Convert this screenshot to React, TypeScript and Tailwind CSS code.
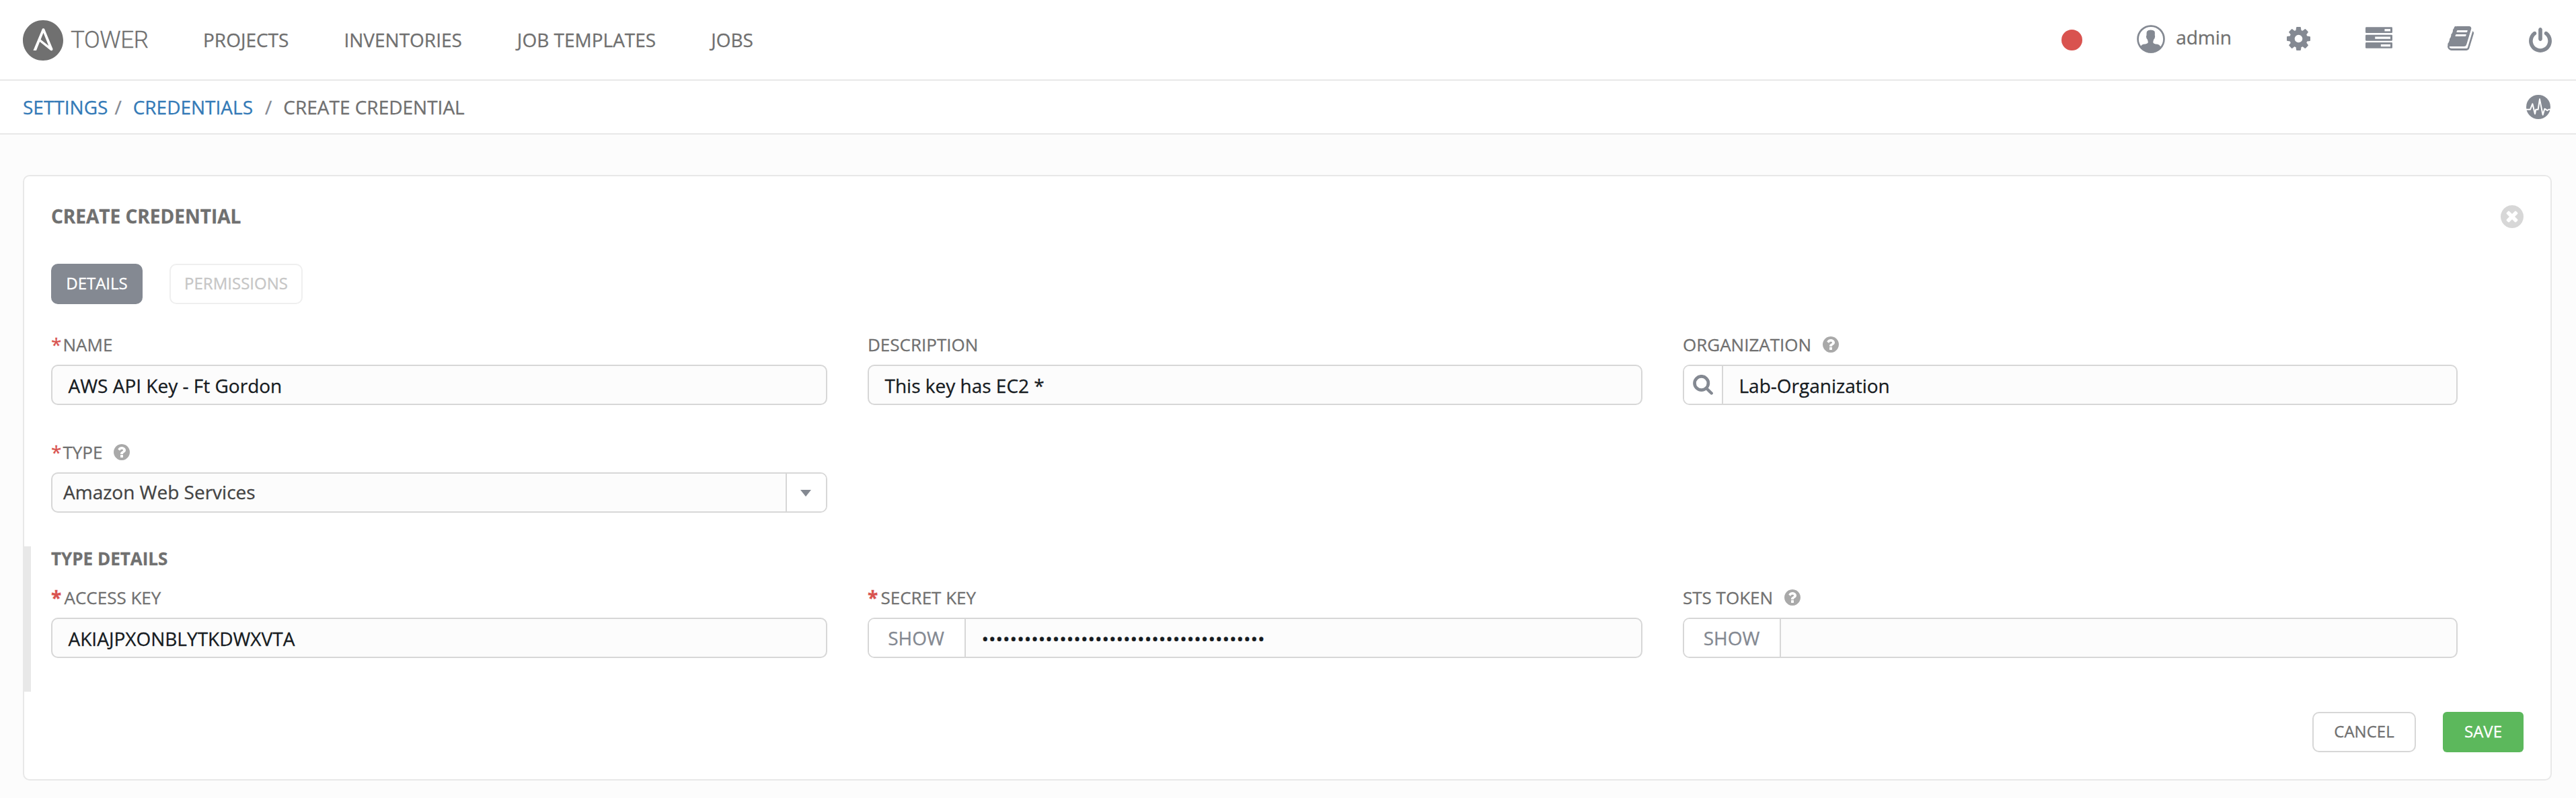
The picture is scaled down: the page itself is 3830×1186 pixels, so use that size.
import React from "react";

const CIRCLE =
  "m0 0M1664 896q0 209-103 385.5t-279.5 279.5-385.5 103-385.5-103-279.5-279.5-103-385.5 103-385.5 279.5-279.5 385.5-103 385.5 103 279.5 279.5 103 385.5z";

function HelpIcon() {
  return (
    <svg viewBox="128 128 1536 1536" className="ml-[17px] h-6 w-6 fill-[#a9a9a9]">
      <path
        fillRule="evenodd"
        d={
          "M1024 1376v-192q0-14-9-23t-23-9h-192q-14 0-23 9t-9 23v192q0 14 9 23t23 9h192q14 0 23-9t9-23zm256-672q0-88-55.5-163t-138.5-116-170-41q-243 0-371 213-15 24 8 42l132 100q7 6 19 6 16 0 25-12 53-68 86-92 34-24 86-24 48 0 85.5 26t37.5 59q0 38-20 61t-68 45q-63 28-115.5 86.5t-52.5 125.5v36q0 14 9 23t23 9h192q14 0 23-9t9-23q0-19 21.5-49.5t54.5-49.5q32-18 49-28.5t46-35 44.5-48 28-60.5 12.5-81z" +
          CIRCLE
        }
      />
    </svg>
  );
}

function CloseIcon() {
  return (
    <svg viewBox="128 128 1536 1536" className="h-[34px] w-[34px] translate-y-px fill-[#d7d7d7]">
      <path
        fillRule="evenodd"
        d={
          "M1277 1122q0-26-19-45l-181-181 181-181q19-19 19-45 0-27-19-46l-90-90q-19-19-46-19-26 0-45 19l-181 181-181-181q-19-19-45-19-27 0-46 19l-90 90q-19 19-19 46 0 26 19 45l181 181-181 181q-19 19-19 45 0 27 19 46l90 90q19 19 46 19 26 0 45-19l181-181 181 181q19 19 45 19 27 0 46-19l90-90q19-19 19-46z" +
          CIRCLE
        }
      />
    </svg>
  );
}

function AnsibleLogo() {
  return (
    <svg viewBox="0 0 24 24" className="h-[60px] w-[60px] fill-[#707070]">
      <path d="M10.617 11.473l4.686 3.695-3.102-7.662zM12 0C5.371 0 0 5.371 0 12s5.371 12 12 12 12-5.371 12-12S18.629 0 12 0zm5.797 17.305c-.011.471-.403.842-.875.83-.236 0-.416-.09-.664-.293l-6.19-5-2.079 5.203H6.191L11.438 5.44c.124-.314.427-.52.764-.506.326-.014.63.189.742.506l4.774 11.494c.045.111.08.234.08.348-.001.009-.001.009-.001.023z" />
    </svg>
  );
}

function UserIcon() {
  return (
    <svg viewBox="443 112 124 124" className="h-[42px] w-[42px] fill-[#848992]">
      <clipPath id="user-ring">
        <circle cx="505" cy="174" r="61" />
      </clipPath>
      <circle cx="505" cy="174" r="57.5" fill="none" stroke="#848992" strokeWidth="8" />
      <path
        clipPath="url(#user-ring)"
        d="M488 140q4-6 16-6t17 6q2 4 1 18 2 3 0 10-1 5-4 7-1 5-3 8v8q3 4 10 5 10 0 16 4 5 4 8 12v28h-92v-28q4-8 8-12 6-4 16-4 7-1 11-5v-8q-2-3-3-8-3-2-4-7-2-7 1-10-1-14 2-18z"
      />
    </svg>
  );
}

function GearIcon() {
  return (
    <svg viewBox="128 128 1536 1536" className="h-[35px] w-[35px] fill-[#848992]">
      <path d="M1152 896q0-106-75-181t-181-75-181 75-75 181 75 181 181 75 181-75 75-181zm512-109v222q0 12-8 23t-20 13l-185 28q-19 54-39 91 35 50 107 138 10 12 10 25t-9 23q-27 37-99 108t-94 71q-12 0-26-9l-138-108q-44 23-91 38-16 136-29 186-7 28-36 28h-222q-14 0-24.5-8.5t-11.5-21.5l-28-184q-49-16-90-37l-141 107q-10 9-25 9-14 0-25-11-126-114-165-168-7-10-7-23 0-12 8-23 15-21 51-66.5t54-70.5q-27-50-41-99l-183-27q-13-2-21-12.5t-8-23.5v-222q0-12 8-23t19-13l186-28q14-46 39-92-40-57-107-138-10-12-10-24 0-10 9-23 26-36 98.5-107.5t94.5-71.5q13 0 26 10l138 107q44-23 91-38 16-136 29-186 7-28 36-28h222q14 0 24.5 8.5t11.5 21.5l28 184q49 16 90 37l142-107q9-9 24-9 13 0 25 10 129 119 165 170 7 8 7 22 0 12-8 23-15 21-51 66.5t-54 70.5q26 50 41 98l183 28q13 2 21 12.5t8 23.5z" />
    </svg>
  );
}

function ServersIcon() {
  return (
    <svg viewBox="0 0 121 96" className="h-8 w-10 fill-[#848992]">
      <rect y="0" width="121" height="27" rx="4" />
      <rect y="35" width="121" height="27" rx="4" />
      <rect y="69" width="121" height="27" rx="4" />
      <rect x="86" y="9" width="26" height="10" fill="#fff" />
      <rect x="43" y="43.5" width="69" height="10" fill="#fff" />
      <rect x="69" y="78" width="43" height="10" fill="#fff" />
    </svg>
  );
}

function BookIcon() {
  return (
    <svg viewBox="63 128 1665 1536" className="h-9 w-[39px] fill-[#848992]">
      <path d="M1703 478q40 57 18 129l-275 906q-19 64-76.5 107.5t-122.5 43.5h-923q-77 0-148.5-53.5t-99.5-131.5q-24-67-2-127 0-4 3-27t4-37q1-8-3-21.5t-3-19.5q2-11 8-21t16.5-23.5 16.5-23.5q23-38 45-91.5t30-91.5q3-10 .5-30t-.5-28q3-11 17-28t17-23q21-36 42-92t25-90q1-9-2.5-32t.5-28q4-13 22-30.5t22-22.5q19-26 42.5-84.5t27.5-96.5q1-8-3-25.5t-2-26.5q2-8 9-18t18-23 17-21q8-12 16.5-30.5t15-35 16-36 19.5-32 26.5-23.5 36-11.5 47.5 5.5l-1 3q38-9 51-9h761q74 0 114 56t18 130l-274 906q-36 119-71.5 153.5t-128.5 34.5h-869q-27 0-38 15-11 16-1 43 24 70 144 70h923q29 0 56-15.5t35-41.5l300-987q7-22 5-57 38 15 59 43zm-1064 2q-4 13 2 22.5t20 9.5h608q13 0 25.5-9.5t16.5-22.5l21-64q4-13-2-22.5t-20-9.5h-608q-13 0-25.5 9.5t-16.5 22.5zm-83 256q-4 13 2 22.5t20 9.5h608q13 0 25.5-9.5t16.5-22.5l21-64q4-13-2-22.5t-20-9.5h-608q-13 0-25.5 9.5t-16.5 22.5z" />
    </svg>
  );
}

function PowerIcon() {
  return (
    <svg viewBox="128 0 1536 1664" className="h-[37px] w-[34px] fill-[#848992]">
      <path d="M1664 896q0 156-61 298t-164 245-245 164-298 61-298-61-245-164-164-245-61-298q0-182 80.5-343t226.5-270q43-32 95.5-25t83.5 50q32 42 24.5 94.5t-49.5 84.5q-98 74-151.5 181t-53.5 228q0 104 40.5 198.5t109.5 163.5 163.5 109.5 198.5 40.5 198.5-40.5 163.5-109.5 109.5-163.5 40.5-198.5q0-121-53.5-228t-151.5-181q-42-32-49.5-84.5t24.5-94.5q31-43 84-50t95 25q146 109 226.5 270t80.5 343zm-640-768v640q0 52-38 90t-90 38-90-38-38-90v-640q0-52 38-90t90-38 90 38 38 90z" />
    </svg>
  );
}

function ActivityIcon() {
  return (
    <svg viewBox="978 421 108 108" className="h-9 w-9">
      <circle cx="1032" cy="475" r="54" fill="#848992" />
      <path
        d="M976 486h20l10-25 11 45 4-20h10l7-46 14 70 8-27 6 3 6 5 6-5h10"
        fill="none"
        stroke="#fff"
        strokeWidth="6"
        strokeLinejoin="round"
      />
    </svg>
  );
}

function SearchIcon() {
  return (
    <svg viewBox="0 0 30 30" className="h-[30px] w-[30px]" fill="none" stroke="#848992">
      <circle cx="12.7" cy="12.5" r="10.2" strokeWidth="4.7" />
      <path d="M20 20l7.7 7.5" strokeWidth="4.4" strokeLinecap="round" />
    </svg>
  );
}

function Label({ text, star, help }: { text: string; star?: "normal" | "bold"; help?: boolean }) {
  return (
    <div className="flex h-9 items-center text-[26px] leading-9 text-[#707070]">
      {star === "normal" && <span className="w-[17.5px] text-[28px] text-[#d9534f]">*</span>}
      {star === "bold" && <span className="w-[19.5px] text-[28px] font-bold text-[#d9534f]">*</span>}
      <span>{text}</span>
      {help && <HelpIcon />}
    </div>
  );
}

type FieldProps = {
  text: string;
  value: string;
  star?: "normal" | "bold";
  help?: boolean;
  addon?: React.ReactNode;
  addonWidth?: string;
};

function Field({ text, value, star, help, addon, addonWidth = "" }: FieldProps) {
  return (
    <div>
      <Label text={text} star={star} help={help} />
      <div className="mt-3 flex h-[60px] overflow-hidden rounded-[10px] border-2 border-[#d7d7d7] bg-[#fcfcfc]">
        {addon && (
          <div
            className={
              "flex items-center justify-center border-r-2 border-[#d7d7d7] bg-white text-[28px] text-[#848992] " +
              addonWidth
            }
          >
            {addon}
          </div>
        )}
        <div className="flex flex-1 items-center pt-[2px] pl-[23.5px] text-[28px] leading-9 text-[#161b1f]">
          {value}
        </div>
      </div>
    </div>
  );
}

const grid = "grid grid-cols-[1154px_1152px_1152px] gap-x-[60px]";

export default function App() {
  return (
    <div className="min-h-[1186px] w-[3830px] bg-[#fcfcfc] font-['Open_Sans',sans-serif] text-[28px] leading-9 text-[#707070] [-webkit-text-stroke:0.3px]">
      <header className="flex h-[120px] items-center justify-between border-b-2 border-[#e8e8e8] bg-white pr-9 pl-[34px]">
        <div className="flex items-center">
          <div className="flex w-[268px] items-center gap-[11px] pt-[2px]">
            <AnsibleLogo />
            <span className="font-['Roboto',sans-serif] text-[35px] font-light tracking-[-0.4px]">TOWER</span>
          </div>
          <nav className="flex gap-[82px]">
            <span>PROJECTS</span>
            <span>INVENTORIES</span>
            <span>JOB TEMPLATES</span>
            <span>JOBS</span>
          </nav>
        </div>
        <div className="flex items-center">
          <span className="mr-[81px] h-[31px] w-[31px] rounded-full bg-[#d9534f]" />
          <div className="mr-[82px] flex items-center">
            <span className="mr-4 -mt-[2px]">
              <UserIcon />
            </span>
            <span className="-mt-2">admin</span>
          </div>
          <span className="-mt-[3px] mr-[82px]">
            <GearIcon />
          </span>
          <span className="-mt-[6px] mr-[82px]">
            <ServersIcon />
          </span>
          <span className="-mt-1 mr-[82px]">
            <BookIcon />
          </span>
          <PowerIcon />
        </div>
      </header>

      <div className="flex h-20 items-center justify-between border-b-2 border-[#e8e8e8] bg-white pr-[38px] pl-[34px]">
        <div className="flex items-center">
          <span className="text-[#337ab7]">SETTINGS</span>
          <span className="mr-[17px] ml-[10px] text-[#848992]">/</span>
          <span className="text-[#337ab7]">CREDENTIALS</span>
          <span className="mr-[17px] ml-[18px] text-[#848992]">/</span>
          <span>CREATE CREDENTIAL</span>
        </div>
        <ActivityIcon />
      </div>

      <main className="pt-15 pr-9 pl-[34px]">
        <section className="h-[900px] rounded-[10px] border-2 border-[#e8e8e8] bg-white px-10 pt-[42px]">
          <div className="flex h-[34px] items-center justify-between">
            <h1 className="font-bold">CREATE CREDENTIAL</h1>
            <CloseIcon />
          </div>

          <div className="mt-[54px] flex gap-10 text-2xl">
            <div className="flex h-[60px] w-[136px] items-center justify-center rounded-[10px] bg-[#848992] pb-[2px] text-white">
              DETAILS
            </div>
            <div className="flex h-[60px] w-[198px] items-center justify-center rounded-[10px] border-2 border-[#efefef] pb-[2px] text-[#c6c6c6]">
              PERMISSIONS
            </div>
          </div>

          <div className={"mt-[42px] " + grid}>
            <Field text="NAME" star="normal" value="AWS API Key - Ft Gordon" />
            <Field text="DESCRIPTION" value="This key has EC2 *" />
            <Field
              text="ORGANIZATION"
              help
              value="Lab-Organization"
              addon={<SearchIcon />}
              addonWidth="w-[58px]"
            />
          </div>

          <div className={"mt-[52px] " + grid}>
            <div>
              <Label text="TYPE" star="normal" help />
              <div className="mt-3 flex h-[60px] overflow-hidden rounded-[10px] border-2 border-[#d7d7d7] bg-[#fcfcfc]">
                <div className="flex flex-1 items-center pb-[2px] pl-4 text-[#444]">Amazon Web Services</div>
                <div className="flex w-[60px] items-center justify-center border-l-2 border-[#d7d7d7] bg-white pt-[2px] pr-[2px]">
                  <svg viewBox="0 0 16 10" className="h-[10px] w-4 fill-[#848992]">
                    <path d="M0 0h16L8 10z" />
                  </svg>
                </div>
              </div>
            </div>
          </div>

          <div className="-mx-10 mt-[50px] h-[216px] border-l-[10px] border-[#e8e8e8] pl-[30px]">
            <h2 className="text-[26px] font-bold">TYPE DETAILS</h2>
            <div className={"mt-[22px] " + grid}>
              <Field text="ACCESS KEY" star="bold" value="AKIAJPXONBLYTKDWXVTA" />
              <Field
                text="SECRET KEY"
                star="bold"
                value={"•".repeat(40)}
                addon="SHOW"
                addonWidth="w-[144px] pr-[2px]"
              />
              <Field text="STS TOKEN" help value="" addon="SHOW" addonWidth="w-[144px] pr-px" />
            </div>
          </div>

          <div className="mt-[30px] flex justify-end gap-10 text-2xl">
            <div className="flex h-[60px] w-[154px] items-center justify-center rounded-[10px] border-2 border-[#d7d7d7] pb-[2px]">
              CANCEL
            </div>
            <div className="flex h-[60px] w-[120px] items-center justify-center rounded-md bg-[#5cb85c] pb-[2px] text-white">
              SAVE
            </div>
          </div>
        </section>
      </main>
    </div>
  );
}
